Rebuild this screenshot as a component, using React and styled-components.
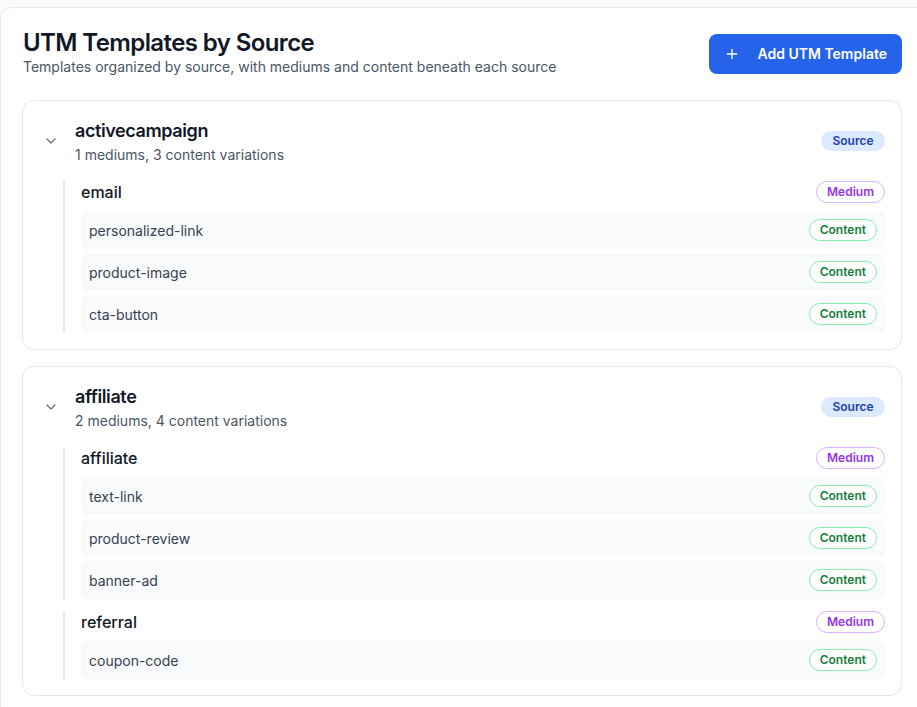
import React from "react";
import styled, { createGlobalStyle } from "styled-components";
import { ChevronDown, Plus } from "lucide-react";

const sources = [
  {
    name: "activecampaign",
    mediums: [
      {
        name: "email",
        contents: ["personalized-link", "product-image", "cta-button"],
      },
    ],
  },
  {
    name: "affiliate",
    mediums: [
      {
        name: "affiliate",
        contents: ["text-link", "product-review", "banner-ad"],
      },
      { name: "referral", contents: ["coupon-code"] },
    ],
  },
];

const GlobalStyle = createGlobalStyle`
  html, body {
    margin: 0;
    padding: 0;
    background: #f9fafb;
    overflow: hidden;
  }
  body {
    font-family: Inter, "Noto Sans", "Liberation Sans", sans-serif;
    color: #111827;
    -webkit-font-smoothing: antialiased;
  }
  * {
    box-sizing: border-box;
  }
`;

const Panel = styled.div`
  margin-top: 7px;
  width: calc(100% + 20px);
  min-height: 720px;
  background: #ffffff;
  border: 1px solid #e5e7eb;
  border-radius: 12px;
  padding: 21px 34px 24px 21px;
`;

const Header = styled.div`
  display: flex;
  align-items: center;
  justify-content: space-between;
  margin-bottom: 23px;
`;

const Title = styled.h1`
  margin: 0 0 0 1px;
  font-size: 24px;
  line-height: 28px;
  font-weight: 600;
  letter-spacing: -0.6px;
  color: #111827;
`;

const Subtitle = styled.p`
  margin: 0 0 0 1px;
  font-size: 14px;
  line-height: 20px;
  color: #4b5563;
`;

const AddButton = styled.button`
  display: inline-flex;
  align-items: center;
  gap: 17px;
  height: 40px;
  padding: 0 15px 0 15px;
  margin-top: 1px;
  border: none;
  border-radius: 8px;
  background: #2563eb;
  color: #ffffff;
  font-family: inherit;
  font-size: 14px;
  font-weight: 600;
  cursor: pointer;
`;

const SourceList = styled.div`
  display: flex;
  flex-direction: column;
  gap: 16px;
`;

const SourceCard = styled.div`
  border: 1px solid #e5e7eb;
  border-radius: 12px;
  padding: 16px;
  background: #ffffff;
`;

const SourceHead = styled.div`
  display: flex;
  align-items: center;
  gap: 12px;
`;

const Toggle = styled.span`
  display: flex;
  align-items: center;
  justify-content: center;
  width: 24px;
  height: 24px;
  color: #6b7280;
`;

const SourceInfo = styled.div`
  flex: 1;
`;

const SourceName = styled.div`
  font-size: 18px;
  line-height: 28px;
  font-weight: 600;
  letter-spacing: -0.4px;
  color: #111827;
`;

const SourceMeta = styled.div`
  font-size: 14px;
  line-height: 20px;
  color: #4b5563;
`;

const Badge = styled.span`
  display: inline-flex;
  align-items: center;
  height: ${(p) => (p.$tone === "source" ? "20px" : "22px")};
  padding: 0 ${(p) => (p.$tone === "source" ? "11.5px" : "10px")};
  border-radius: 999px;
  font-size: 12px;
  font-weight: 600;
  line-height: 1;
  white-space: nowrap;
  ${(p) =>
    p.$tone === "source" &&
    `background: #dbeafe; color: #1e40af; border: none;`}
  ${(p) =>
    p.$tone === "medium" &&
    `background: #ffffff; color: #9333ea; border: 1px solid #d8b4fe;`}
  ${(p) =>
    p.$tone === "content" &&
    `background: #ffffff; color: #15803d; border: 1px solid #86efac;`}
`;

const Mediums = styled.div`
  display: flex;
  flex-direction: column;
  gap: 12px;
  margin-top: 16px;
  margin-left: 24px;
`;

const MediumGroup = styled.div`
  border-left: 2px solid #e5e7eb;
  padding-left: 16px;
`;

const MediumHead = styled.div`
  display: flex;
  align-items: center;
  justify-content: space-between;
  height: 22px;
  margin-bottom: 8px;
`;

const MediumName = styled.span`
  font-size: 16px;
  font-weight: 500;
  color: #111827;
`;

const ContentList = styled.div`
  display: flex;
  flex-direction: column;
  gap: 4px;
`;

const ContentRow = styled.div`
  display: flex;
  align-items: center;
  justify-content: space-between;
  padding: 8px;
  background: #f9fafb;
  border-radius: 6px;
  font-size: 14px;
  color: #374151;
`;

export default function App() {
  return (
    <>
      <GlobalStyle />
      <Panel>
        <Header>
          <div>
            <Title>UTM Templates by Source</Title>
            <Subtitle>
              Templates organized by source, with mediums and content beneath
              each source
            </Subtitle>
          </div>
          <AddButton>
            <Plus size={16} strokeWidth={2} />
            Add UTM Template
          </AddButton>
        </Header>

        <SourceList>
          {sources.map((source) => {
            const count = source.mediums.reduce(
              (n, m) => n + m.contents.length,
              0
            );
            return (
              <SourceCard key={source.name}>
                <SourceHead>
                  <Toggle>
                    <ChevronDown size={16} strokeWidth={2} />
                  </Toggle>
                  <SourceInfo>
                    <SourceName>{source.name}</SourceName>
                    <SourceMeta>
                      {source.mediums.length} mediums, {count} content
                      variations
                    </SourceMeta>
                  </SourceInfo>
                  <Badge $tone="source">Source</Badge>
                </SourceHead>

                <Mediums>
                  {source.mediums.map((medium) => (
                    <MediumGroup key={medium.name}>
                      <MediumHead>
                        <MediumName>{medium.name}</MediumName>
                        <Badge $tone="medium">Medium</Badge>
                      </MediumHead>
                      <ContentList>
                        {medium.contents.map((c) => (
                          <ContentRow key={c}>
                            <span>{c}</span>
                            <Badge $tone="content">Content</Badge>
                          </ContentRow>
                        ))}
                      </ContentList>
                    </MediumGroup>
                  ))}
                </Mediums>
              </SourceCard>
            );
          })}
        </SourceList>
      </Panel>
    </>
  );
}
